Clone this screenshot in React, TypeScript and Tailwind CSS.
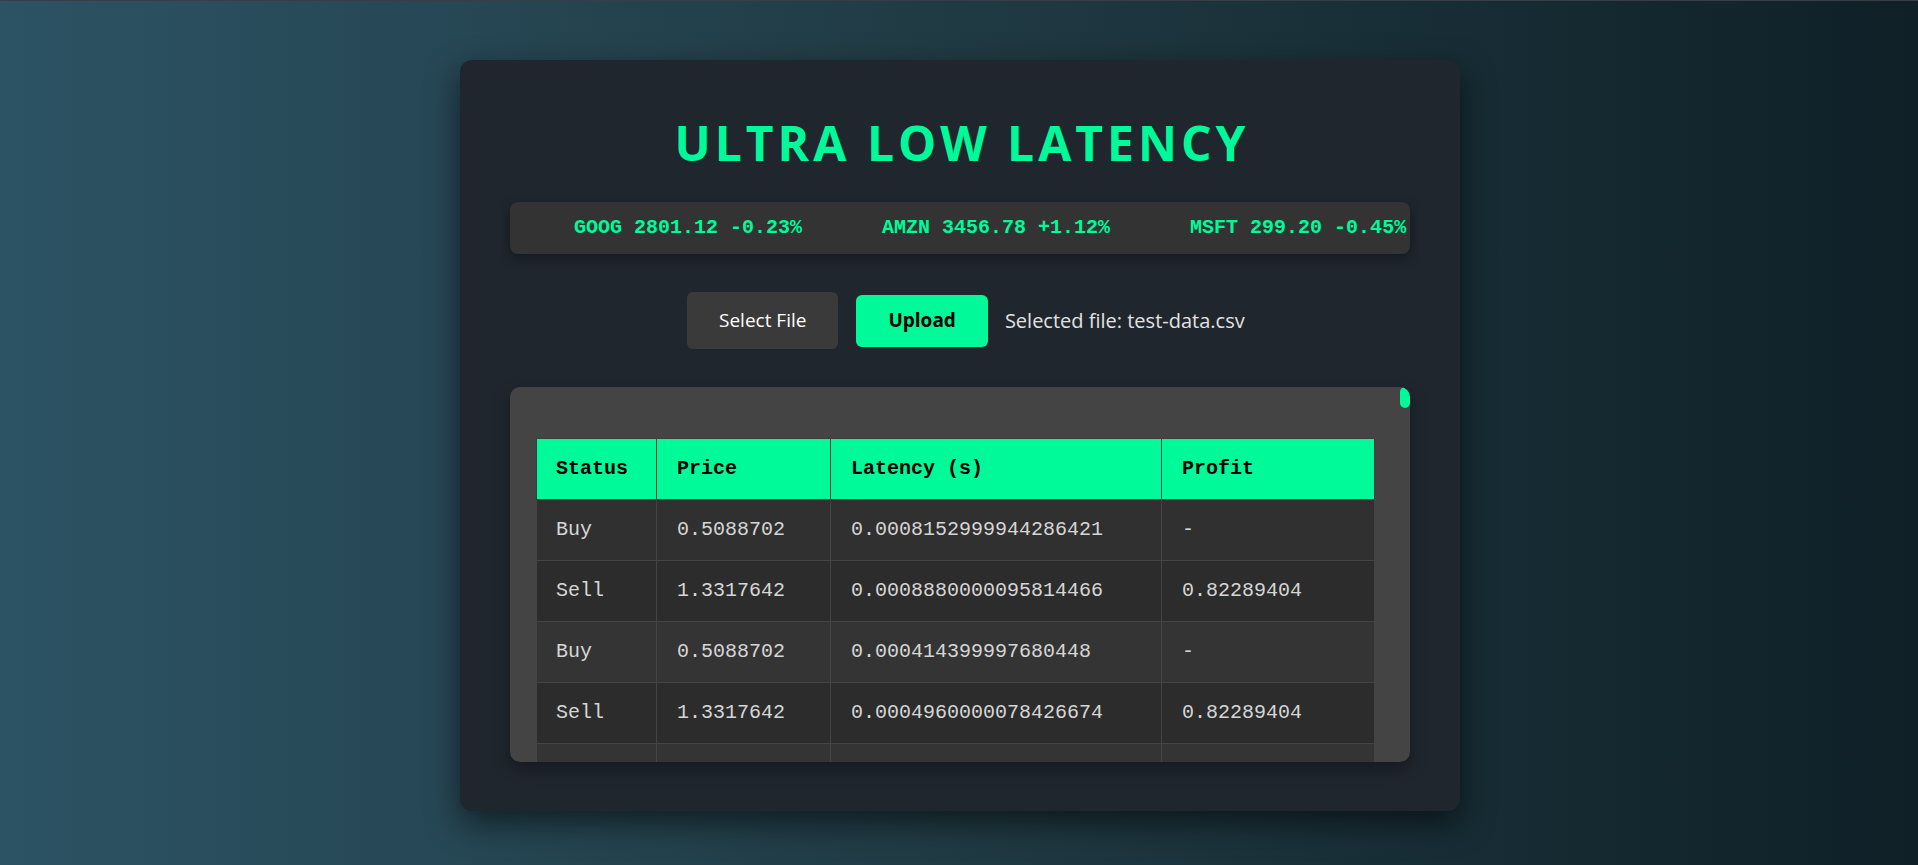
import React from "react";

const rows = [
  ["Buy", "0.5088702", "0.0008152999944286421", "-"],
  ["Sell", "1.3317642", "0.0008880000095814466", "0.82289404"],
  ["Buy", "0.5088702", "0.000414399997680448", "-"],
  ["Sell", "1.3317642", "0.0004960000078426674", "0.82289404"],
];

const rowBg = ["bg-[#303030]", "bg-[#2c2c2c]", "bg-[#343434]", "bg-[#2c2c2c]"];

export default function App() {
  return (
    <div
      className="min-h-screen w-full bg-[linear-gradient(to_right,#2c5364,#203a43,#0f2027)] flex flex-col items-center"
      style={{ fontFamily: '"Open Sans", "Noto Sans", sans-serif' }}
    >
      <div className="h-px w-full bg-[#3a3d45]" />
      <div className="mt-[59px] ml-[2px] w-[1000px] rounded-[12px] bg-[#1f262e] px-[50px] pt-[50px] pb-[49px] shadow-[0_12px_32px_rgba(0,0,0,0.55)]">
        <h1 className="text-center text-[48px] leading-[65px] font-bold text-[#00fa9a] tracking-[4px] pl-[4px] mb-[27px]">
          ULTRA LOW LATENCY
        </h1>

        <div
          className="h-[52px] rounded-[8px] bg-[#333333] flex items-center gap-[80px] pl-[64px] overflow-hidden whitespace-nowrap shadow-[0_4px_14px_rgba(0,0,0,0.35)] text-[20px] font-bold text-[#00fa9a]"
          style={{ fontFamily: '"Liberation Mono", "Courier New", monospace' }}
        >
          <span>GOOG 2801.12 -0.23%</span>
          <span>AMZN 3456.78 +1.12%</span>
          <span>MSFT 299.20 -0.45%</span>
        </div>

        <div className="mt-[38px] flex items-center pl-[177px] h-[57px]">
          <button className="h-[57px] px-[32px] rounded-[6px] bg-[#3a3a3a] text-white text-[19px]">
            Select File
          </button>
          <button className="ml-[18px] h-[52px] px-[32px] rounded-[6px] bg-[#00fa9a] text-black text-[19px] font-bold">
            Upload
          </button>
          <span className="ml-[17px] text-[20px] text-[#e2e2e2]">Selected file: test-data.csv</span>
        </div>

        <div className="relative mt-[38px] h-[375px] rounded-[10px] bg-[#444444] overflow-hidden pt-[51px] pl-[26px] pr-[36px] shadow-[0_6px_16px_rgba(0,0,0,0.35)]">
          <div className="absolute right-0 top-0 w-[10px] h-[21px] rounded-full bg-[#00fa9a]" />
          <table
            className="w-[838px] table-fixed border-collapse text-[20px] leading-[20px]"
            style={{ fontFamily: '"Liberation Mono", "Courier New", monospace' }}
          >
            <thead>
              <tr className="bg-[#00fa9a] text-black">
                <th className="w-[120px] border border-[#3c3c3c] px-[19px] py-[20px] text-left font-bold">Status</th>
                <th className="w-[174px] border border-[#3c3c3c] px-[20px] py-[20px] text-left font-bold">Price</th>
                <th className="w-[331px] border border-[#3c3c3c] px-[20px] py-[20px] text-left font-bold">Latency (s)</th>
                <th className="w-[213px] border border-[#3c3c3c] px-[20px] py-[20px] text-left font-bold">Profit</th>
              </tr>
            </thead>
            <tbody className="text-[#d6d6d6]">
              {rows.map((r, i) => (
                <tr key={i} className={rowBg[i]}>
                  <td className="border border-[#444444] px-[19px] py-[20px]">{r[0]}</td>
                  <td className="border border-[#444444] px-[20px] py-[20px]">{r[1]}</td>
                  <td className="border border-[#444444] px-[20px] py-[20px]">{r[2]}</td>
                  <td className="border border-[#444444] px-[20px] py-[20px]">{r[3]}</td>
                </tr>
              ))}
              <tr className="bg-[#343434]">
                <td className="border border-[#444444] h-[61px]" />
                <td className="border border-[#444444] h-[61px]" />
                <td className="border border-[#444444] h-[61px]" />
                <td className="border border-[#444444] h-[61px]" />
              </tr>
            </tbody>
          </table>
        </div>
      </div>
    </div>
  );
}
